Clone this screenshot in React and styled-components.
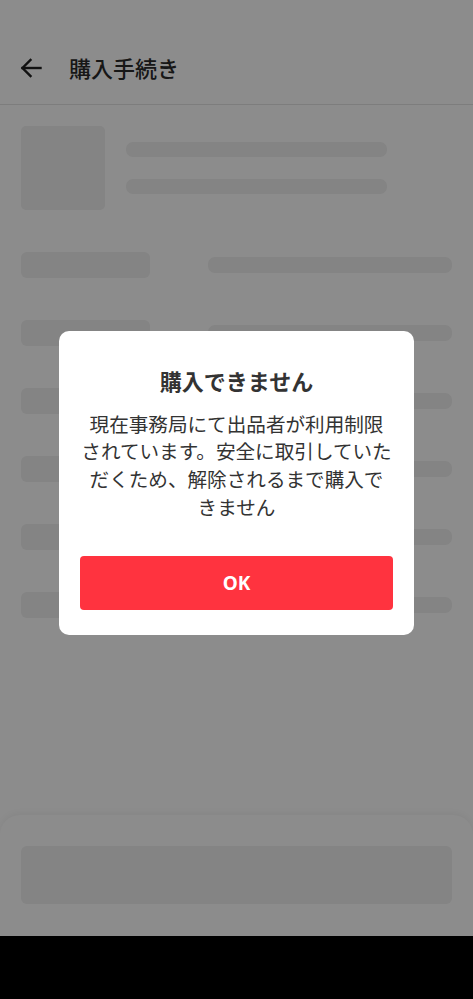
import React from "react"
import styled, { createGlobalStyle } from "styled-components"

const GlobalStyle = createGlobalStyle`
html, body {
    margin: 0;
    padding: 0;
    background: #000;
}
body {
    font-family: "Noto Sans CJK JP", "Noto Sans", sans-serif;
}
* {
    box-sizing: border-box;
}
`

const Phone = styled.div`
width: 473px;
height: 999px;
display: flex;
flex-direction: column;
overflow: hidden;
`

const Screen = styled.div`
position: relative;
height: 936px;
background: #fff;
display: flex;
flex-direction: column;
`

const StatusBar = styled.div`
height: 30px;
flex-shrink: 0;
`

const Header = styled.header`
height: 75px;
flex-shrink: 0;
display: flex;
align-items: center;
padding-left: 20px;
gap: 27px;
border-bottom: 1px solid #e3e3e3;
`

const BackButton = styled.span`
display: flex;
width: 22px;
height: 20px;
margin-top: 2px;
`

const Title = styled.h1`
margin: 0;
font-size: 22px;
font-weight: 500;
color: #2a2a2a;
`

const Content = styled.main`
flex: 1;
padding: 21px 21px 0;
display: flex;
flex-direction: column;
`

const Product = styled.div`
display: flex;
gap: 21px;
margin-bottom: 42px;
`

const Thumb = styled.div`
width: 84px;
height: 84px;
border-radius: 5px;
background: #f0f0f0;
`

const ProductLines = styled.div`
display: flex;
flex-direction: column;
gap: 22px;
padding-top: 16px;
`

const Bar = styled.div`
width: ${p => p.$w}px;
height: ${p => p.$h}px;
border-radius: ${p => p.$r || 7}px;
background: #f0f0f0;
`

const Row = styled.div`
display: flex;
align-items: flex-start;
justify-content: space-between;
margin-bottom: 42px;

& > :last-child {
    margin-top: 5px;
}
`

const Sheet = styled.div`
flex-shrink: 0;
border-radius: 20px 20px 0 0;
background: #fff;
box-shadow: 0 -2px 6px rgba(0,0,0,0.05);
padding: 31px 21px 32px;
`

const SheetButton = styled.div`
height: 58px;
border-radius: 6px;
background: #f0f0f0;
`

const Overlay = styled.div`
position: absolute;
inset: 0;
background: rgba(0,0,0,0.45);
display: flex;
align-items: center;
justify-content: center;
padding-top: 30px;
`

const Dialog = styled.div`
width: 355px;
background: #fff;
border-radius: 10px;
padding: 34px 21px 25px;
display: flex;
flex-direction: column;
align-items: center;
`

const DialogTitle = styled.h2`
margin: 0 0 15px;
font-size: 22px;
line-height: 30px;
font-weight: 700;
color: #333;
`

const DialogText = styled.p`
margin: 0 0 36px;
font-size: 19.6px;
line-height: 27.6px;
color: #333;
text-align: center;
white-space: nowrap;
`

const OkButton = styled.button`
width: 100%;
height: 54px;
border: none;
border-radius: 4px;
background: #ff333f;
color: #fff;
font-family: "Noto Sans", "Noto Sans CJK JP", sans-serif;
font-size: 19px;
font-weight: 700;
`

const NavBar = styled.div`
flex: 1;
background: #000;
`

const rows = [0, 1, 2, 3, 4, 5]

const lines = [
    "現在事務局にて出品者が利用制限",
    "されています。安全に取引していた",
    "だくため、解除されるまで購入で",
    "きません",
]

const App = () => {
    return (
        <>
            <GlobalStyle />
            <Phone>
                <Screen>
                    <StatusBar />
                    <Header>
                        <BackButton>
                            <svg width="22" height="20" viewBox="0 0 22 20" fill="none" stroke="#222" strokeWidth="2.4" strokeLinecap="square">
                                <path d="M2.5 10H20.5" />
                                <path d="M10.5 2L2.5 10L10.5 18" />
                            </svg>
                        </BackButton>
                        <Title>購入手続き</Title>
                    </Header>
                    <Content>
                        <Product>
                            <Thumb />
                            <ProductLines>
                                <Bar $w={261} $h={15} />
                                <Bar $w={261} $h={15} />
                            </ProductLines>
                        </Product>
                        {rows.map(i => (
                            <Row key={i}>
                                <Bar $w={129} $h={26} $r={6} />
                                <Bar $w={244} $h={16} $r={7} />
                            </Row>
                        ))}
                    </Content>
                    <Sheet>
                        <SheetButton />
                    </Sheet>
                    <Overlay>
                        <Dialog>
                            <DialogTitle>購入できません</DialogTitle>
                            <DialogText>
                                {lines.map((l, i) => (
                                    <React.Fragment key={i}>
                                        {l}
                                        {i < lines.length - 1 && <br />}
                                    </React.Fragment>
                                ))}
                            </DialogText>
                            <OkButton>OK</OkButton>
                        </Dialog>
                    </Overlay>
                </Screen>
                <NavBar />
            </Phone>
        </>
    )
}

export default App
